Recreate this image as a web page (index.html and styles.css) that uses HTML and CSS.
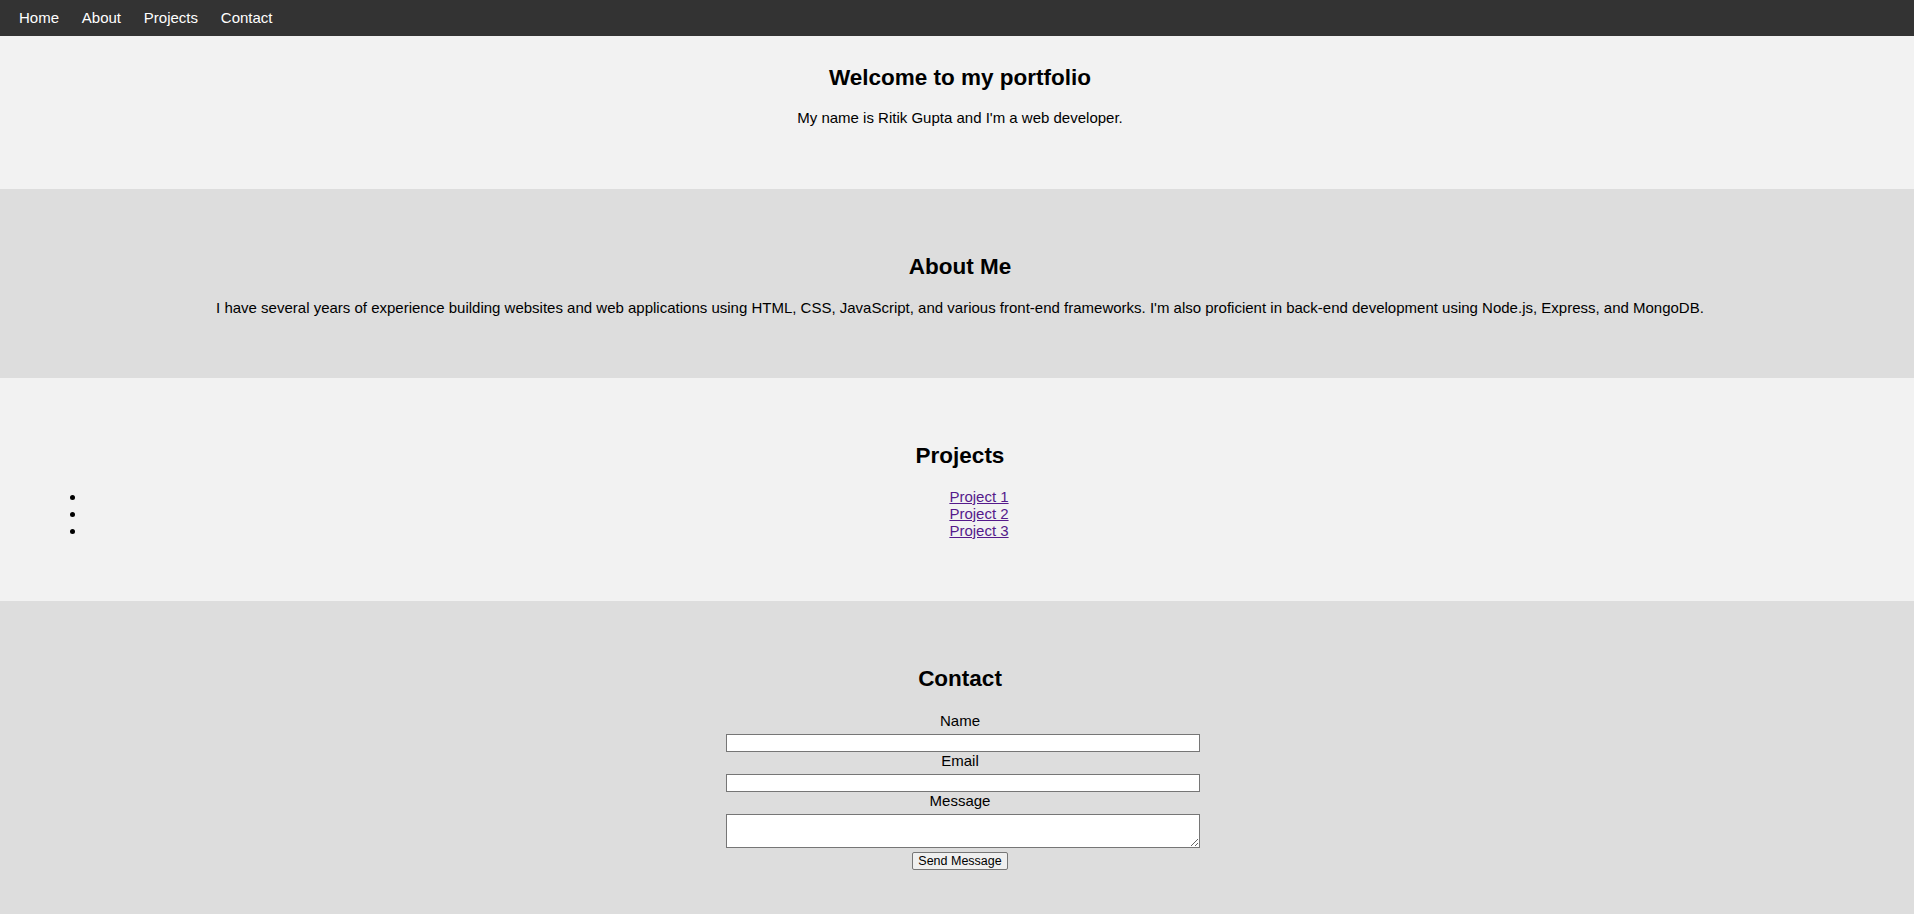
FILE: index.html
```html
<!DOCTYPE html>
<html lang="en">
<head>
<meta charset="utf-8">
<title>Ritik Gupta - Portfolio</title>
<link rel="stylesheet" href="styles.css">
</head>
<body>
<nav class="topnav">
  <a href="#home" class="nav-link">Home</a>
  <a href="#about" class="nav-link">About</a>
  <a href="#projects" class="nav-link">Projects</a>
  <a href="#contact" class="nav-link">Contact</a>
</nav>
<header class="hero" id="home">
  <h2 class="title">Welcome to my portfolio</h2>
  <p class="text">My name is Ritik Gupta and I'm a web developer.</p>
</header>
<section class="block dark" id="about">
  <h2 class="title">About Me</h2>
  <p class="text">I have several years of experience building websites and web applications using HTML, CSS, JavaScript, and various front-end frameworks. I'm also proficient in back-end development using Node.js, Express, and MongoDB.</p>
</section>
<section class="block light" id="projects">
  <h2 class="title">Projects</h2>
  <ul class="project-list">
    <li><a href="#p1" class="project-link">Project 1</a></li>
    <li><a href="#p2" class="project-link">Project 2</a></li>
    <li><a href="#p3" class="project-link">Project 3</a></li>
  </ul>
</section>
<section class="block dark contact" id="contact">
  <h2 class="title">Contact</h2>
  <form class="contact-form">
    <label class="field-label" for="name">Name</label>
    <input class="field-input" type="text" id="name" name="name">
    <label class="field-label" for="email">Email</label>
    <input class="field-input" type="email" id="email" name="email">
    <label class="field-label" for="message">Message</label>
    <textarea class="field-area" id="message" name="message"></textarea>
    <div class="actions"><button class="send-btn" type="submit">Send Message</button></div>
  </form>
</section>
</body>
</html>
```

FILE: styles.css
```css
html {
  background: #dddddd;
}

body {
  margin: 0;
  font-family: "Liberation Sans", Arial, sans-serif;
  font-size: 15px;
  color: #000;
  background: #dddddd;
}

.topnav {
  display: flex;
  align-items: center;
  gap: 22.8px;
  height: 36px;
  padding: 0 19px;
  background: #333333;
}

.nav-link {
  color: #ffffff;
  text-decoration: none;
  font-size: 15px;
  line-height: 17.25px;
}

.hero {
  background: #f2f2f2;
  padding: 10px 32px 47.5px 38px;
  text-align: center;
}

.title {
  font-size: 22.5px;
  font-weight: bold;
  margin: 18.7px 0;
  line-height: normal;
}

.text {
  margin: 15px 0;
}

.block {
  padding: 46.75px 32px 46.75px 38px;
  text-align: center;
}

.dark {
  background: #dddddd;
}

.light {
  background: #f2f2f2;
}

.project-list {
  margin: 15px 0;
  padding: 0 10px 0 48px;
  list-style: disc;
}

.project-link {
  color: #551a8b;
  text-decoration: underline;
}

.contact {
  padding-bottom: 38px;
}

.contact-form {
  width: 480px;
  margin: 0 auto;
  padding-top: 1px;
}

.field-label {
  display: block;
  text-align: center;
  line-height: 17.25px;
}

.field-input {
  display: block;
  box-sizing: border-box;
  width: 474px;
  height: 18px;
  margin: 5px 0 0 auto;
  padding: 0 2px;
  border: 1px solid #767676;
  border-radius: 0;
  background: #ffffff;
  font-family: "Liberation Sans", Arial, sans-serif;
  font-size: 12.5px;
  outline: none;
}

.field-area {
  display: block;
  box-sizing: border-box;
  width: 474px;
  height: 34px;
  margin: 4px 0 0 auto;
  padding: 1px 2px;
  border: 1px solid #767676;
  border-radius: 0;
  background: #ffffff;
  font-family: "Liberation Mono", monospace;
  font-size: 12.5px;
}

.actions {
  text-align: center;
  margin-top: 4px;
  line-height: 0;
}

.send-btn {
  box-sizing: border-box;
  width: 96px;
  height: 18px;
  padding: 0 5px;
  border: 1px solid #767676;
  border-radius: 2px;
  background: #efefef;
  color: #000;
  font-family: "Liberation Sans", Arial, sans-serif;
  font-size: 12.5px;
  line-height: 14px;
}
```
